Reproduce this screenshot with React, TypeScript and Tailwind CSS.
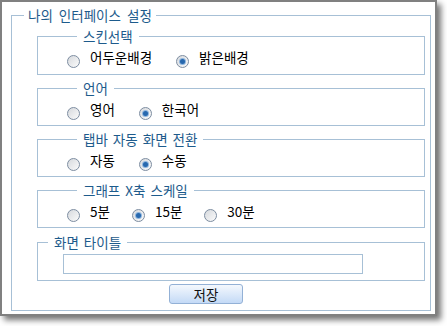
import { useState } from 'react'

const FONT = { fontFamily: '"Noto Sans CJK KR", "Liberation Sans", sans-serif' }

type Opt = { label: string; gap?: string }

function Radio({ checked }: { checked: boolean }) {
  return (
    <span className="mt-[6px] flex h-[13px] w-[13px] shrink-0 items-center justify-center rounded-full border border-[#7d8da1] bg-gradient-to-br from-[#d6d9dd] to-[#fbfbfb]">
      {checked && <span className="h-[5px] w-[5px] rounded-full bg-[#2768ae] ring-1 ring-[#8fb6de]" />}
    </span>
  )
}

function Group({ title, options, value, onChange, first }: {
  title: string
  options: Opt[]
  value: number
  onChange: (i: number) => void
  first?: boolean
}) {
  return (
    <fieldset className={`ml-[25px] mr-[5px] border border-[#a7c0d6] pt-[5px] pl-[29px] ${first ? 'pb-[6px]' : 'pb-[5px]'}`}>
      <legend className="ml-[10px] px-[6px] text-[13.5px] leading-[16px] text-[#1d5b8c] [word-spacing:2px]">{title}</legend>
      <div className="flex items-start">
        {options.map((o, i) => (
          <label key={o.label} className={`flex cursor-pointer items-start ${i > 0 ? o.gap : ''}`} onClick={() => onChange(i)}>
            <Radio checked={value === i} />
            <span className="ml-[10px] text-[13.5px] leading-[16px] text-black">{o.label}</span>
          </label>
        ))}
      </div>
    </fieldset>
  )
}

export default function App() {
  const [skin, setSkin] = useState(1)
  const [lang, setLang] = useState(1)
  const [tab, setTab] = useState(1)
  const [scale, setScale] = useState(1)
  const [title, setTitle] = useState('')

  return (
    <div className="h-[326px] w-[447px] bg-white" style={FONT}>
      <div className="h-[316px] w-[437px] border-2 border-[#808080] bg-white pt-[5px] shadow-[4px_4px_6px_rgba(0,0,0,0.55)]">
        <fieldset className="ml-[9px] w-[420px] border border-[#a7c0d6] pt-[5px] pb-[6px]">
          <legend className="ml-[12px] px-[4px] text-[13.5px] leading-[16px] text-[#1d5b8c] [word-spacing:3px]">나의 인터페이스 설정</legend>
          <div className="flex flex-col gap-[5px]">
            <Group first title="스킨선택" value={skin} onChange={setSkin}
              options={[{ label: '어두운배경' }, { label: '밝은배경', gap: 'ml-[24px]' }]} />
            <Group title="언어" value={lang} onChange={setLang}
              options={[{ label: '영어' }, { label: '한국어', gap: 'ml-[24px]' }]} />
            <Group title="탭바 자동 화면 전환" value={tab} onChange={setTab}
              options={[{ label: '자동' }, { label: '수동', gap: 'ml-[24px]' }]} />
            <Group title="그래프 X축 스케일" value={scale} onChange={setScale}
              options={[{ label: '5분' }, { label: '15분', gap: 'ml-[22px]' }, { label: '30분', gap: 'ml-[22px]' }]} />
            <fieldset className="mt-[1px] ml-[25px] mr-[5px] border border-[#a7c0d6] pt-[4px] pb-[6px]">
              <legend className="ml-[10px] px-[6px] text-[13.5px] leading-[16px] text-[#1d5b8c] [word-spacing:2px]">화면 타이틀</legend>
              <input
                value={title}
                onChange={e => setTitle(e.target.value)}
                className="ml-[25px] block h-[20px] w-[300px] border border-[#a7c0d6] px-1 text-[13px] outline-none"
              />
            </fieldset>
          </div>
          <button className="mt-[3px] ml-[157px] block h-[20px] w-[74px] rounded-[3px] border border-[#93b1d6] bg-gradient-to-b from-[#f4f8fd] to-[#c4daf6] text-[13.5px] leading-[16px] text-[#111]">
            저장
          </button>
        </fieldset>
      </div>
    </div>
  )
}
